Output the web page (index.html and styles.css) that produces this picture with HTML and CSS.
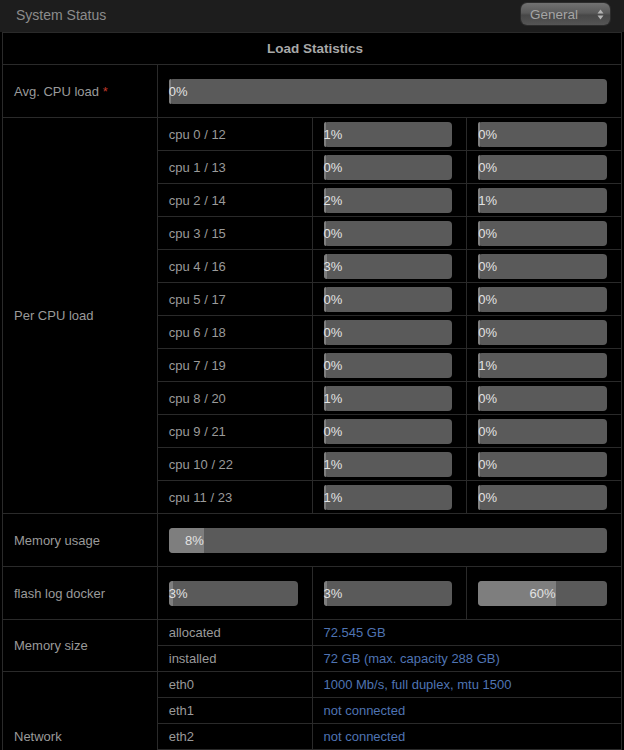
FILE: index.html
```html
<!DOCTYPE html>
<html lang="en">
<head>
    <meta charset="UTF-8">
    <meta name="viewport" content="width=device-width, initial-scale=1.0">
    <title>System Status</title>
    <link rel="stylesheet" href="styles.css">
</head>
<body>
    <div class="title-bar">
        <span class="title">System Status</span>
        <div class="picker">
            <span>General</span>
            <svg width="7" height="11" viewBox="0 0 7 11"><path d="M3.5 0.5 L6.5 4.5 L0.5 4.5 Z M3.5 10.5 L6.5 6.5 L0.5 6.5 Z" fill="#b5b5b5"/></svg>
        </div>
    </div>

    <table class="stats">
        <colgroup><col><col><col><col></colgroup>
        <tr class="head-row"><th colspan="4">Load Statistics</th></tr>
        <tr class="tall">
            <td>Avg. CPU load <span class="req">*</span></td>
            <td colspan="3" class="bar-cell"><div class="bar"><div class="fill" style="width: 0%">0%</div></div></td>
        </tr>
        <tbody id="cpuRows"></tbody>
        <tr class="tall">
            <td>Memory usage</td>
            <td colspan="3" class="bar-cell"><div class="bar"><div class="fill" style="width: 8%">8%</div></div></td>
        </tr>
        <tr class="tall">
            <td>flash log docker</td>
            <td class="bar-cell"><div class="bar"><div class="fill" style="width: 3%">3%</div></div></td>
            <td class="bar-cell"><div class="bar"><div class="fill" style="width: 3%">3%</div></div></td>
            <td class="bar-cell"><div class="bar"><div class="fill" style="width: 60%">60%</div></div></td>
        </tr>
        <tr class="small">
            <td rowspan="2">Memory size</td>
            <td>allocated</td>
            <td colspan="2" class="value">72.545 GB</td>
        </tr>
        <tr class="small">
            <td>installed</td>
            <td colspan="2" class="value">72 GB (max. capacity 288 GB)</td>
        </tr>
        <tr class="small">
            <td rowspan="5">Network</td>
            <td>eth0</td>
            <td colspan="2" class="value">1000 Mb/s, full duplex, mtu 1500</td>
        </tr>
        <tr class="small"><td>eth1</td><td colspan="2" class="value">not connected</td></tr>
        <tr class="small"><td>eth2</td><td colspan="2" class="value">not connected</td></tr>
        <tr class="small"><td>eth3</td><td colspan="2" class="value">not connected</td></tr>
        <tr class="small"><td>bond0</td><td colspan="2" class="value">not connected</td></tr>
    </table>

    <script>
        // per cpu load: [core, hyperthread]
        const cpuLoad = [
            [1, 0], [0, 0], [2, 1], [0, 0], [3, 0], [0, 0],
            [0, 0], [0, 1], [1, 0], [0, 0], [1, 0], [1, 0]
        ];

        function bar(pct) {
            return '<td class="bar-cell"><div class="bar"><div class="fill" style="width: ' + pct + '%">' + pct + '%</div></div></td>';
        }

        const body = document.getElementById('cpuRows');
        cpuLoad.forEach(function(load, i) {
            const tr = document.createElement('tr');
            tr.className = 'cpu';
            let html = '';
            if (i === 0) {
                html += '<td rowspan="' + cpuLoad.length + '">Per CPU load</td>';
            }
            html += '<td>cpu ' + i + ' / ' + (i + 12) + '</td>' + bar(load[0]) + bar(load[1]);
            tr.innerHTML = html;
            body.appendChild(tr);
        });
    </script>
</body>
</html>
```

FILE: styles.css
```css
body {
    font-family: "Liberation Sans", Arial, sans-serif;
    font-size: 13px;
    margin: 0;
    background-color: #000;
    color: #9a9a9a;
}

.title-bar {
    height: 32px;
    background-color: #1d1d1d;
    display: flex;
    align-items: center;
    justify-content: space-between;
    padding: 0 14px 0 16px;
}

.title {
    font-size: 14px;
    color: #8c8c8c;
    margin-top: -3px;
}

.picker {
    width: 89px;
    height: 22px;
    box-sizing: border-box;
    margin-top: -4px;
    padding: 0 6px 0 9px;
    border-radius: 6px;
    background: linear-gradient(#727272, #5a5a5a 45%, #474747 55%, #555);
    box-shadow: 0 0 0 1px #2c2c2c;
    display: flex;
    align-items: center;
    justify-content: space-between;
    color: #a5a5a5;
    font-size: 13.5px;
}

.stats {
    width: 620px;
    margin: 0 2px;
    border-collapse: collapse;
    table-layout: fixed;
}

.stats td, .stats th {
    border: 1px solid #2a2a2a;
    padding: 0 14px 0 11px;
    white-space: nowrap;
}

.head-row th {
    height: 31px;
    text-align: center;
    font-weight: bold;
    font-size: 13.5px;
    color: #a8a8a8;
    padding: 0 0 0 6px;
}

.tall td {
    height: 52px;
}

.cpu td {
    height: 32px;
}

.small td {
    height: 25px;
}

.req {
    color: #c0392b;
}

.value {
    color: #4f74b3;
}

.bar {
    height: 25px;
    border-radius: 4px;
    background-color: #5a5a5a;
    overflow: visible;
}

.fill {
    height: 100%;
    min-width: 2px;
    box-sizing: border-box;
    background-color: #7e7e7e;
    border-radius: 4px 0 0 4px;
    color: #e2e2e2;
    line-height: 25px;
    text-align: right;
    white-space: nowrap;
}
```
